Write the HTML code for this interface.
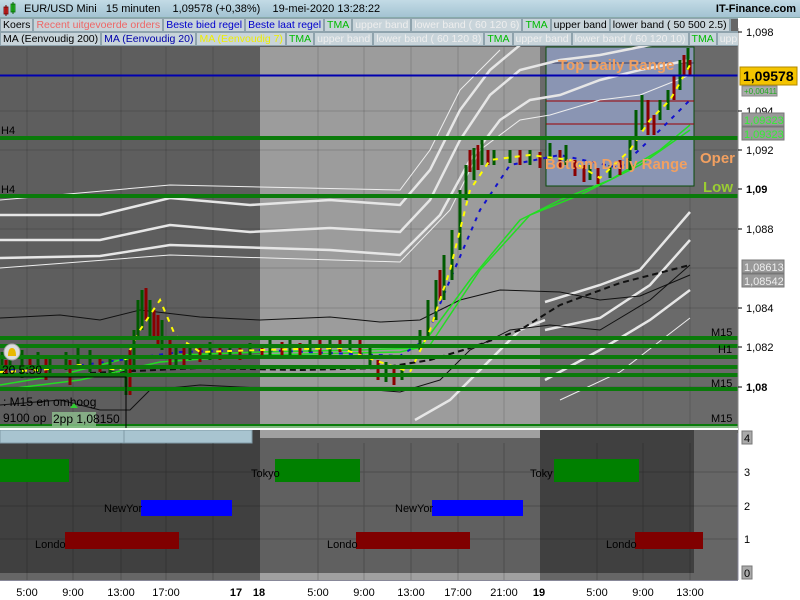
<!DOCTYPE html>
<html><head><meta charset="utf-8"><style>
*{margin:0;padding:0;box-sizing:border-box}
body{width:800px;height:600px;overflow:hidden;background:#fff;font-family:"Liberation Sans",sans-serif;position:relative}
#title{position:absolute;left:0;top:0;width:800px;height:18px;background:linear-gradient(#c3dbe6,#a3c3d2);border-bottom:1px solid #8aa}
#title span{position:absolute;top:3px;font-size:11px;color:#000;white-space:nowrap}
.lg{position:absolute;left:0;height:14px;display:flex;font-size:10.5px;white-space:nowrap;overflow:hidden}
.lg div{background:#c8d4da;border:1px solid #8fa3ad;padding:0 2px;line-height:12px;flex:none}
</style></head><body>
<div id="title">
<svg style="position:absolute;left:3px;top:2px" width="14" height="15"><rect x="1" y="5" width="4" height="7" fill="#e33" stroke="#600" stroke-width="0.8"/><line x1="3" y1="3" x2="3" y2="14" stroke="#600"/><rect x="8" y="2" width="4" height="8" fill="#3c3" stroke="#060" stroke-width="0.8"/><line x1="10" y1="0" x2="10" y2="12" stroke="#060"/></svg>
<span style="left:24px">EUR/USD Mini &nbsp;&nbsp;15 minuten &nbsp;&nbsp;&nbsp;1,09578 (+0,38%) &nbsp;&nbsp;&nbsp;19-mei-2020 13:28:22</span>
<span style="right:4px;font-weight:bold">IT-Finance.com</span>
</div>
<svg style="position:absolute;left:0;top:18px" width="800" height="582" viewBox="0 18 800 582">
<rect x="0" y="18" width="738" height="412" fill="#5e5e5e"/>
<rect x="260" y="47" width="280" height="383" fill="#9c9c9c"/>
<rect x="540" y="47" width="198" height="383" fill="#6a6a6a"/>
<g stroke="#000" stroke-opacity="0.15" stroke-width="1">
<path d="M27 47V430M73 47V430M121 47V430M166 47V430M213 47V430M318 47V430M364 47V430M411 47V430M458 47V430M504 47V430M597 47V430M643 47V430M690 47V430"/>
<path d="M0 111H738M0 150H738M0 229H738M0 268H738M0 308H738M0 347H738M0 387H738"/>
</g>
<rect x="546" y="47" width="148" height="139" fill="#8a95b3" stroke="#0a4a0a"/>
<path d="M546 63H694" stroke="#224" stroke-width="0.8"/>
<path d="M546 101H694M546 124H694" stroke="#900" stroke-width="1"/>
<g fill="none" stroke="#e6e6e6" stroke-width="2.5">
<path d="M0 215L100 215L170 198L250 205L330 200L400 205L430 170L460 110L490 70L520 45L560 35L620 30L690 28"/>
<path d="M0 240L100 240L170 225L250 232L330 228L400 232L430 200L460 140L490 95L520 70L560 60L600 55L650 45L690 40"/>
<path d="M0 258L100 256L170 245L330 250L400 255L440 215L470 160L500 120L530 100L560 95L600 80L640 70L690 60"/>
<path d="M545 302L600 285L640 270L690 212"/>
<path d="M545 330L600 318L650 285L690 240"/>
<path d="M545 380L600 350L650 320L690 290"/>
<path d="M415 420L450 400L490 360L520 330L545 320"/>
</g>
<g fill="none" stroke="#eee" stroke-width="1">
<path d="M0 268L170 255L400 262L450 210L480 150L520 120L550 115L600 100L640 95L690 75"/>
<path d="M0 200L170 185L400 190L430 150L460 90L500 50"/>
<path d="M560 400L620 372L690 318"/>
</g>
<g fill="none" stroke="#111" stroke-width="1">
<path d="M0 318L60 315L100 320L140 310L200 317L260 320L330 317L380 322L420 320L460 300L500 290L560 292L600 300L640 296L690 275"/>
<path d="M0 405L60 400L100 410L130 410L150 390L200 385L300 390L350 388L400 392L440 380L470 350L510 330L550 325L600 330L650 300L690 265"/>
</g>
<path d="M90 373L200 368L300 370L380 368L430 360L470 348L520 330L560 305L620 283L690 265" fill="none" stroke="#111" stroke-width="2" stroke-dasharray="6 4"/>
<g fill="none" stroke="#22dd22" stroke-width="1.5">
<path d="M0 385L60 375L120 360L180 355L260 352L360 350L420 348L470 280L520 220L560 200L610 180L660 150L690 125"/>
<path d="M0 390L80 380L160 362L260 355L400 352L430 345L480 270L530 215L580 195L640 165L690 130"/>
</g>
<path d="M0 370L60 368L120 360L180 352L260 350L400 356L425 340L450 280L480 210L510 165L560 155L620 168L660 130L690 100" fill="none" stroke="#1111cc" stroke-width="2" stroke-dasharray="4 6"/>
<g stroke="#005a00" stroke-width="3">
<path d="M2 352V372M10 355V370M22 350V378M38 352V372M50 358V375M66 352V370M78 345V365M90 350V372M110 355V375M126 360V395M134 330V370M138 300V340M142 290V330M150 300V340M162 320V350M176 345V365M190 345V360M210 342V360M230 345V358M250 343V358M270 340V358M290 340V355M310 338V352M330 340V355M350 337V352M370 345V365M386 362V382M402 365V380M420 330V350M428 300V340M436 280V320M444 255V300M452 230V280M460 190V250M466 165V200M474 148V180M482 140V165M494 150V165M510 150V163M530 150V165M550 143V160M566 145V165M590 165V180M610 165V178M630 140V170M636 110V150M642 95V130M660 100V120M668 90V110M680 60V90M688 48V70"/>
</g>
<g stroke="#8a0000" stroke-width="3">
<path d="M6 360V375M30 355V370M46 358V380M70 360V385M100 356V372M130 350V395M146 288V320M154 310V340M158 315V345M170 340V365M184 348V366M200 345V362M220 346V360M240 345V360M262 344V356M282 342V356M300 343V357M320 340V355M340 338V352M360 340V358M378 360V380M394 368V385M440 270V300M470 150V172M478 145V170M488 150V165M520 150V165M540 152V168M560 150V168M575 160V176M584 165V182M598 168V184M620 160V175M648 100V135M654 115V135M674 75V100M684 55V75M690 60V75"/>
</g>
<path d="M0 372L40 370L80 365L120 370L140 330L160 300L175 335L200 352L260 350L340 348L380 362L410 372L430 330L450 270L470 190L490 160L530 155L570 160L600 178L630 150L650 120L670 100L690 65" fill="none" stroke="#ffff00" stroke-width="2" stroke-dasharray="5 6"/>
<path d="M0 75.5H738" stroke="#0000b0" stroke-width="2"/>
<g stroke="#0a7a0a" stroke-width="4">
<path d="M0 138H738M0 196H738M0 338H738M0 346H738M0 357H738M0 367H738M0 375H738M0 389H738M0 426H738"/>
</g>
<path d="M0 427H738" stroke="#fff" stroke-width="1"/>
<path d="M0 377H126V430" stroke="#000" fill="none" stroke-width="1"/>
<text x="558" y="70" font-size="15" font-weight="bold" fill="#f2a060" font-family="Liberation Sans">Top Daily Range</text>
<text x="545" y="169" font-size="15" font-weight="bold" fill="#f2a060" font-family="Liberation Sans">Bottom Daily Range</text>
<text x="700" y="163" font-size="15" font-weight="bold" fill="#f2a060" font-family="Liberation Sans">Oper</text>
<text x="703" y="192" font-size="15" font-weight="bold" fill="#9acd32" font-family="Liberation Sans">Low</text>
<g font-size="11" fill="#000" font-family="Liberation Sans">
<text x="1" y="134">H4</text><text x="1" y="193">H4</text>
<text x="711" y="336">M15</text><text x="718" y="353">H1</text><text x="711" y="387">M15</text><text x="711" y="422">M15</text>
<text x="2" y="374" font-size="12">20 5:30</text>
<text x="3" y="406" font-size="12">: M15 en omhoog</text>
<text x="3" y="422" font-size="12">9100 op</text>
</g>
<rect x="52" y="412" width="44" height="14" fill="#8fbf8f" opacity="0.8"/>
<text x="53" y="423" font-size="12" fill="#000" font-family="Liberation Sans">2pp 1,08150</text>
<path d="M70 408l4 -5l4 5z" fill="#3c3"/>
<circle cx="12" cy="352" r="8" fill="#ddd" stroke="#aaa"/><path d="M8 356q0-8 4-8q4 0 4 8z" fill="#e8b800"/>
<rect x="738" y="18" width="62" height="562" fill="#fff"/>
<path d="M738 28V580" stroke="#888"/>
<g stroke="#000"><path d="M738 32h4M738 111h4M738 150h4M738 189h4M738 229h4M738 308h4M738 347h4M738 387h4"/></g>
<g font-size="11" fill="#000" font-family="Liberation Sans">
<text x="746" y="36">1,098</text><text x="746" y="115">1,094</text><text x="746" y="154">1,092</text>
<text x="746" y="193" font-weight="bold">1,09</text><text x="746" y="233">1,088</text>
<text x="746" y="312">1,084</text><text x="746" y="351">1,082</text><text x="746" y="391" font-weight="bold">1,08</text>
</g>
<rect x="740" y="67" width="57" height="18" fill="#f4c400" stroke="#b08800"/>
<text x="743" y="81" font-size="14" font-weight="bold" font-family="Liberation Sans">1,09578</text>
<rect x="742" y="86" width="35" height="10" fill="#aaa" stroke="#888"/>
<text x="744" y="94" font-size="8" fill="#2a2" font-family="Liberation Sans">+0,00411</text>
<g font-size="11" font-family="Liberation Sans">
<rect x="742" y="113" width="42" height="13" fill="#999" stroke="#777"/><text x="744" y="124" fill="#3e3">1,09323</text>
<rect x="742" y="127" width="42" height="13" fill="#999" stroke="#777"/><text x="744" y="138" fill="#3e3">1,09323</text>
<rect x="742" y="260" width="42" height="13" fill="#999" stroke="#777"/><text x="744" y="271" fill="#eee">1,08613</text>
<rect x="742" y="274" width="42" height="13" fill="#999" stroke="#777"/><text x="744" y="285" fill="#eee">1,08542</text>
</g>
<rect x="0" y="430" width="738" height="150" fill="#676767"/>
<rect x="0" y="430" width="260" height="150" fill="#404040"/>
<rect x="260" y="430" width="280" height="150" fill="#a0a0a0"/>
<rect x="260" y="438" width="280" height="135" fill="#606060"/>
<rect x="540" y="430" width="198" height="150" fill="#666"/>
<rect x="540" y="430" width="154" height="143" fill="#404040"/>
<rect x="0" y="573" width="260" height="7" fill="#666"/>
<rect x="0" y="430" width="252" height="13" fill="#a8c4d0" stroke="#7f9aa6"/>
<path d="M124 430V443" stroke="#7f9aa6"/>
<g stroke="#000" stroke-opacity="0.2"><path d="M27 443V580M73 443V580M121 443V580M166 443V580M213 443V580M318 443V580M364 443V580M411 443V580M458 443V580M504 443V580M597 443V580M643 443V580M690 443V580M0 472H738M0 506H738M0 539H738"/></g>
<rect x="0" y="459" width="69" height="23" fill="#008000"/>
<rect x="275" y="459" width="85" height="23" fill="#008000"/>
<rect x="554" y="459" width="85" height="23" fill="#008000"/>
<rect x="141" y="500" width="91" height="16" fill="#0000ff"/>
<rect x="432" y="500" width="91" height="16" fill="#0000ff"/>
<rect x="65" y="532" width="114" height="17" fill="#800000"/>
<rect x="356" y="532" width="114" height="17" fill="#800000"/>
<rect x="635" y="532" width="68" height="17" fill="#800000"/>
<g font-size="11" fill="#000" font-family="Liberation Sans">
<text x="251" y="477">Tokyo</text><text x="530" y="477">Toky</text>
<text x="104" y="512">NewYor</text><text x="395" y="512">NewYor</text>
<text x="35" y="548">Londo</text><text x="327" y="548">Londo</text><text x="606" y="548">Londo</text>
</g>
<rect x="0" y="428" width="738" height="2" fill="#fff"/>
<path d="M738 433V580" stroke="#889"/>
<g font-size="11" font-family="Liberation Sans">
<rect x="742" y="431" width="10" height="13" fill="#aaa" stroke="#777"/><text x="744" y="442">4</text>
<text x="744" y="476">3</text><text x="744" y="510">2</text><text x="744" y="543">1</text>
<rect x="742" y="566" width="10" height="13" fill="#aaa" stroke="#777"/><text x="744" y="577">0</text>
</g>
<rect x="0" y="580" width="800" height="20" fill="#fff"/>
<path d="M0 580.5H738" stroke="#889"/>
<g font-size="11" fill="#000" font-family="Liberation Sans" text-anchor="middle">
<text x="27" y="596">5:00</text><text x="73" y="596">9:00</text><text x="121" y="596">13:00</text><text x="166" y="596">17:00</text>
<text x="236" y="596" font-weight="bold">17</text><text x="259" y="596" font-weight="bold">18</text>
<text x="318" y="596">5:00</text><text x="364" y="596">9:00</text><text x="411" y="596">13:00</text><text x="458" y="596">17:00</text><text x="504" y="596">21:00</text>
<text x="539" y="596" font-weight="bold">19</text><text x="597" y="596">5:00</text><text x="643" y="596">9:00</text><text x="690" y="596">13:00</text>
</g>
</svg>
<div class="lg" style="top:18px;width:738px">
<div>Koers</div><div style="color:#e66">Recent uitgevoerde orders</div><div style="color:#00c">Beste bied regel</div><div style="color:#00c">Beste laat regel</div><div style="color:#0b0">TMA</div><div style="color:#eee">upper band</div><div style="color:#eee">lower band ( 60 120 6)</div><div style="color:#0b0">TMA</div><div>upper band</div><div>lower band ( 50 500 2.5)</div><div style="background:#666;width:10px"></div>
</div>
<div class="lg" style="top:32px;width:738px">
<div>MA (Eenvoudig 200)</div><div style="color:#00a">MA (Eenvoudig 20)</div><div style="color:#ee0">MA (Eenvoudig 7)</div><div style="color:#0b0">TMA</div><div style="color:#eee">upper band</div><div style="color:#eee">lower band ( 60 120 8)</div><div style="color:#0b0">TMA</div><div style="color:#eee">upper band</div><div style="color:#eee">lower band ( 60 120 10)</div><div style="color:#0b0">TMA</div><div style="color:#eee">upp</div>
</div>
</body></html>
